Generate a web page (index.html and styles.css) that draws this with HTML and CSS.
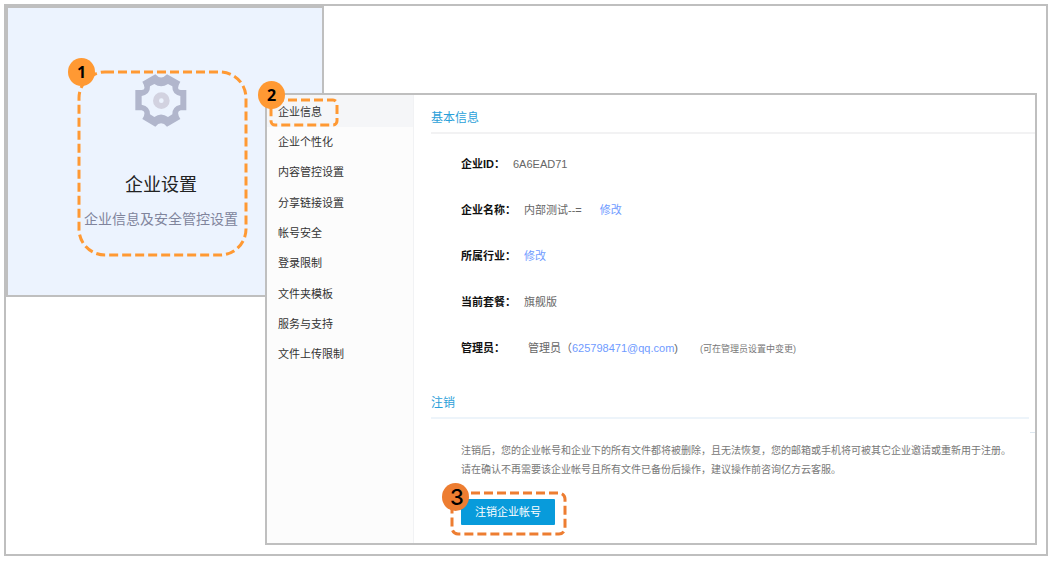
FILE: index.html
```html
<!DOCTYPE html>
<html lang="zh-CN">
<head>
<meta charset="utf-8">
<meta name="viewport" content="width=device-width, initial-scale=1">
<title>企业设置</title>
<link rel="stylesheet" href="styles.css">
</head>
<body>
<div class="frame">
  <section class="card">
    <div class="entry">
      <svg class="outline outline-large" aria-hidden="true"><rect rx="26"/></svg>
      <span class="badge badge-entry">1</span>
      <svg class="gear" viewBox="0 0 156 159" aria-hidden="true">
        <path fill="#b1b6cc" fill-rule="evenodd" d="M61 1 Q78 20 96 1 L136 23 Q122 47 137 48 H154 V109 H137 Q122 112 136 135 L96 158 Q78 138 61 158 L22 135 Q36 112 20 109 H1 V48 H20 Q36 47 22 23 Z M58 30 L45 37 Q46 61 20 66 V92 Q46 98 45 121 L58 129 Q78 114 99 129 L112 121 Q111 98 136 92 V66 Q111 61 112 37 L99 30 Q78 44 58 30 Z"/>
        <circle cx="79" cy="80" r="16" fill="none" stroke="#d2d2e0" stroke-width="18"/>
      </svg>
      <h1 class="entry-title">企业设置</h1>
      <p class="entry-text">企业信息及安全管控设置</p>
    </div>
  </section>

  <div class="panel">
    <nav class="sidebar">
      <ul class="menu">
        <li class="menu-item active">
          <a href="#">企业信息</a>
          <svg class="outline outline-menu" aria-hidden="true"><rect rx="4"/></svg>
          <span class="badge badge-menu">2</span>
        </li>
        <li class="menu-item"><a href="#">企业个性化</a></li>
        <li class="menu-item"><a href="#">内容管控设置</a></li>
        <li class="menu-item"><a href="#">分享链接设置</a></li>
        <li class="menu-item"><a href="#">帐号安全</a></li>
        <li class="menu-item"><a href="#">登录限制</a></li>
        <li class="menu-item"><a href="#">文件夹模板</a></li>
        <li class="menu-item"><a href="#">服务与支持</a></li>
        <li class="menu-item"><a href="#">文件上传限制</a></li>
      </ul>
    </nav>
    <main class="content">
      <section>
        <h2 class="heading">基本信息</h2>
        <dl class="info">
          <div class="row"><dt>企业ID：</dt><dd>6A6EAD71</dd></div>
          <div class="row"><dt>企业名称：</dt><dd>内部测试--=<a class="edit" href="#">修改</a></dd></div>
          <div class="row"><dt>所属行业：</dt><dd><a href="#">修改</a></dd></div>
          <div class="row"><dt>当前套餐：</dt><dd>旗舰版</dd></div>
          <div class="row row-admin"><dt>管理员：</dt><dd>管理员（<a href="#">625798471@qq.com</a>)<small class="note">(可在管理员设置中变更)</small></dd></div>
        </dl>
      </section>
      <section class="closing">
        <h2 class="heading heading-blue">注销</h2>
        <div class="closing-body">
          <p class="warning">注销后，您的企业帐号和企业下的所有文件都将被删除，且无法恢复，您的邮箱或手机将可被其它企业邀请或重新用于注册。<br>请在确认不再需要该企业帐号且所有文件已备份后操作，建议操作前咨询亿方云客服。</p>
          <div class="action">
            <button class="button" type="button">注销企业帐号</button>
            <svg class="outline outline-action" aria-hidden="true"><rect rx="6"/></svg>
            <span class="badge badge-action">3</span>
          </div>
        </div>
      </section>
    </main>
  </div>
</div>
</body>
</html>
```
FILE: styles.css
```css
* {
  box-sizing: border-box;
}

body {
  margin: 0;
  padding: 4px 3px 6px 4px;
  background: #fff;
  color: #333;
  font-family: "Liberation Sans", "Noto Sans CJK SC", sans-serif;
  font-size: 11px;
}

h1, h2, p, ul, dl, dd {
  margin: 0;
  padding: 0;
}

a {
  color: #6f9bff;
  text-decoration: none;
}

/* Overlapping windows share one grid cell */
.frame {
  display: grid;
  border: 2px solid #bfbfbf;
}

.card,
.panel {
  grid-area: 1 / 1;
  border: 2px solid #bfbfbf;
}

.card {
  place-self: start;
  padding: 62px 74px 38px 69px;
  background: #ecf3fe;
}

.entry {
  position: relative;
  display: flex;
  flex-direction: column;
  align-items: center;
  padding: 4px 10px 28px 7px;
}

.gear {
  width: 52px;
  height: 53px;
}

.entry-title {
  margin-top: 45px;
  color: #222;
  font-size: 18px;
  font-weight: 400;
  line-height: 26px;
}

.entry-text {
  margin-top: 11px;
  color: #80849c;
  font-size: 14px;
  line-height: 20px;
  white-space: nowrap;
}

.panel {
  display: flex;
  margin: 87px 9px 9px 259px;
  background: #fff;
}

.sidebar {
  flex: 0 0 147px;
  border-right: 1px solid #f1f2f4;
  background: #fcfcfc;
}

.menu {
  list-style: none;
}

.menu-item {
  position: relative;
  padding-left: 11px;
  line-height: 30px;
}

.menu-item:nth-child(3n + 1) {
  padding-top: 1px;
}

.menu-item a {
  color: #333;
}

.menu-item.active {
  padding-top: 2px;
  background: #f5f6f8;
}

.content {
  flex: 1;
  min-width: 0;
  padding: 0 0 18px 17px;
}

.heading {
  padding: 13px 0 4px;
  border-bottom: 2px solid #f2f2f3;
  color: #2b9fd9;
  font-size: 12px;
  font-weight: 400;
  line-height: 20px;
}

.heading-blue {
  border-color: #edf4fa;
}

.info {
  padding: 7px 0 8px 30px;
}

.row {
  display: flex;
  gap: 8px;
  line-height: 46px;
}

.row dt {
  color: #111;
  font-weight: 700;
}

.row dd {
  color: #666;
}

.row-admin {
  gap: 23px;
}

.edit {
  margin-left: 18px;
}

.note {
  margin-left: 22px;
  color: #777;
  font-size: 9px;
}

.closing {
  position: relative;
  margin-right: 6px;
}

/* Short rule at the panel's right edge */
.closing::after {
  content: "";
  position: absolute;
  top: 52px;
  right: -6px;
  width: 5px;
  height: 1px;
  background: #dde7ef;
}

.closing-body {
  padding: 22px 0 0 30px;
}

.warning {
  color: #777;
  font-size: 10px;
  line-height: 19px;
}

.action {
  position: relative;
  width: fit-content;
  margin-top: 20px;
}

.button {
  display: block;
  padding: 0 14px;
  border: 0;
  border-radius: 1px;
  background: #089bdb;
  color: #fff;
  font: inherit;
  line-height: 26px;
}

/* Numbered callouts */
.outline {
  position: absolute;
  overflow: visible;
  pointer-events: none;
}

.outline rect {
  x: 2px;
  y: 2px;
  width: calc(100% - 4px);
  height: calc(100% - 4px);
  fill: none;
  stroke: #ff9933;
  stroke-width: 3px;
  stroke-dasharray: 9 4;
}

.outline-large {
  top: 0;
  left: 0;
  width: 100%;
  height: 100%;
}

.outline-menu {
  top: 3px;
  left: 2px;
  width: 70px;
  height: 29px;
}

.outline-action {
  top: -8px;
  left: -11px;
  width: calc(100% + 23px);
  height: calc(100% + 19px);
}

.outline-action rect {
  stroke: #ed7d31;
}

.badge {
  position: absolute;
  display: grid;
  place-items: center;
  width: 27px;
  height: 28px;
  border-radius: 50%;
  background: #ff9933;
  color: #000;
  font-family: "Open Sans", sans-serif;
  font-size: 16px;
  font-weight: 700;
  line-height: 1;
}

.badge-entry {
  top: -12px;
  left: -9px;
}

.badge-menu {
  top: -14px;
  left: -9px;
}

.badge-action {
  top: -16px;
  left: -19px;
  padding-left: 3px;
  background: #ed7d31;
  font-family: Inter, sans-serif;
  font-size: 22px;
  font-weight: 500;
}
```
